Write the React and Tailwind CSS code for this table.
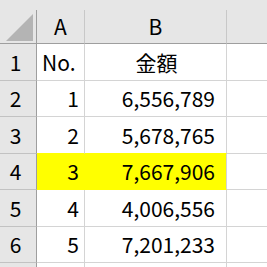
import React from "react";

const rows = [
  { n: 1, a: "No.", b: "金額", h: "h-[37px]", head: true },
  { n: 2, a: "1", b: "6,556,789", h: "h-[36px]" },
  { n: 3, a: "2", b: "5,678,765", h: "h-[37px]", beforeMark: true },
  { n: 4, a: "3", b: "7,667,906", h: "h-[36px]", mark: true },
  { n: 5, a: "4", b: "4,006,556", h: "h-[37px]" },
  { n: 6, a: "5", b: "7,201,233", h: "h-[36px]" },
];

const TriangleCorner = () => (
  <svg width="37" height="34" viewBox="0 0 37 34" className="block">
    <polygon points="6,31 33,31 33,4" fill="#b4b4b4" />
  </svg>
);

export default function App() {
  return (
    <div
      className="w-[267px] h-[267px] overflow-hidden bg-[#e6e6e6] text-black"
      style={{ fontFamily: '"Noto Sans CJK JP", "Noto Sans", sans-serif' }}
    >
      <div className="h-[10px]" />
      <div className="grid grid-cols-[37px_48px_142px_1fr] text-[21px] leading-none">
        {/* column headers */}
        <div className="h-[34px] border-r border-b border-[#9e9e9e]">
          <TriangleCorner />
        </div>
        <div className="h-[34px] flex items-center justify-center border-r border-r-[#c8c8c8] border-b border-b-[#9e9e9e]">
          A
        </div>
        <div className="h-[34px] flex items-center justify-center border-r border-r-[#c8c8c8] border-b border-b-[#9e9e9e]">
          B
        </div>
        <div className="h-[34px] border-b border-[#9e9e9e]" />

        {rows.map((r) => (
          <React.Fragment key={r.n}>
            <div
              className={`${r.h} flex items-center justify-center pr-[5px] border-r border-r-[#9e9e9e] border-b border-b-[#c2c2c2]`}
            >
              {r.n}
            </div>
            <div
              className={`${r.h} flex items-center border-r border-b ${
                r.head ? "justify-start pl-[5px]" : "justify-end pr-[5px]"
              } ${
                r.mark
                  ? "bg-[#ffff00] border-[#ffff00]"
                  : r.beforeMark
                  ? "bg-white border-r-[#d4d4d4] border-b-[#ffff00]"
                  : "bg-white border-[#d4d4d4]"
              }`}
            >
              {r.a}
            </div>
            <div
              className={`${r.h} flex items-center border-r border-r-[#d4d4d4] border-b ${
                r.head ? "justify-center pl-[2px]" : "justify-end pr-[11px]"
              } ${
                r.mark
                  ? "bg-[#ffff00] border-b-[#ffff00]"
                  : r.beforeMark
                  ? "bg-white border-b-[#ffff00]"
                  : "bg-white border-b-[#d4d4d4]"
              }`}
            >
              {r.b}
            </div>
            <div className={`${r.h} bg-white border-b border-[#d4d4d4]`} />
          </React.Fragment>
        ))}

        <div className="h-[10px] border-r border-[#9e9e9e]" />
        <div className="h-[10px] bg-white border-r border-[#d4d4d4]" />
        <div className="h-[10px] bg-white border-r border-[#d4d4d4]" />
        <div className="h-[10px] bg-white" />
      </div>
    </div>
  );
}
